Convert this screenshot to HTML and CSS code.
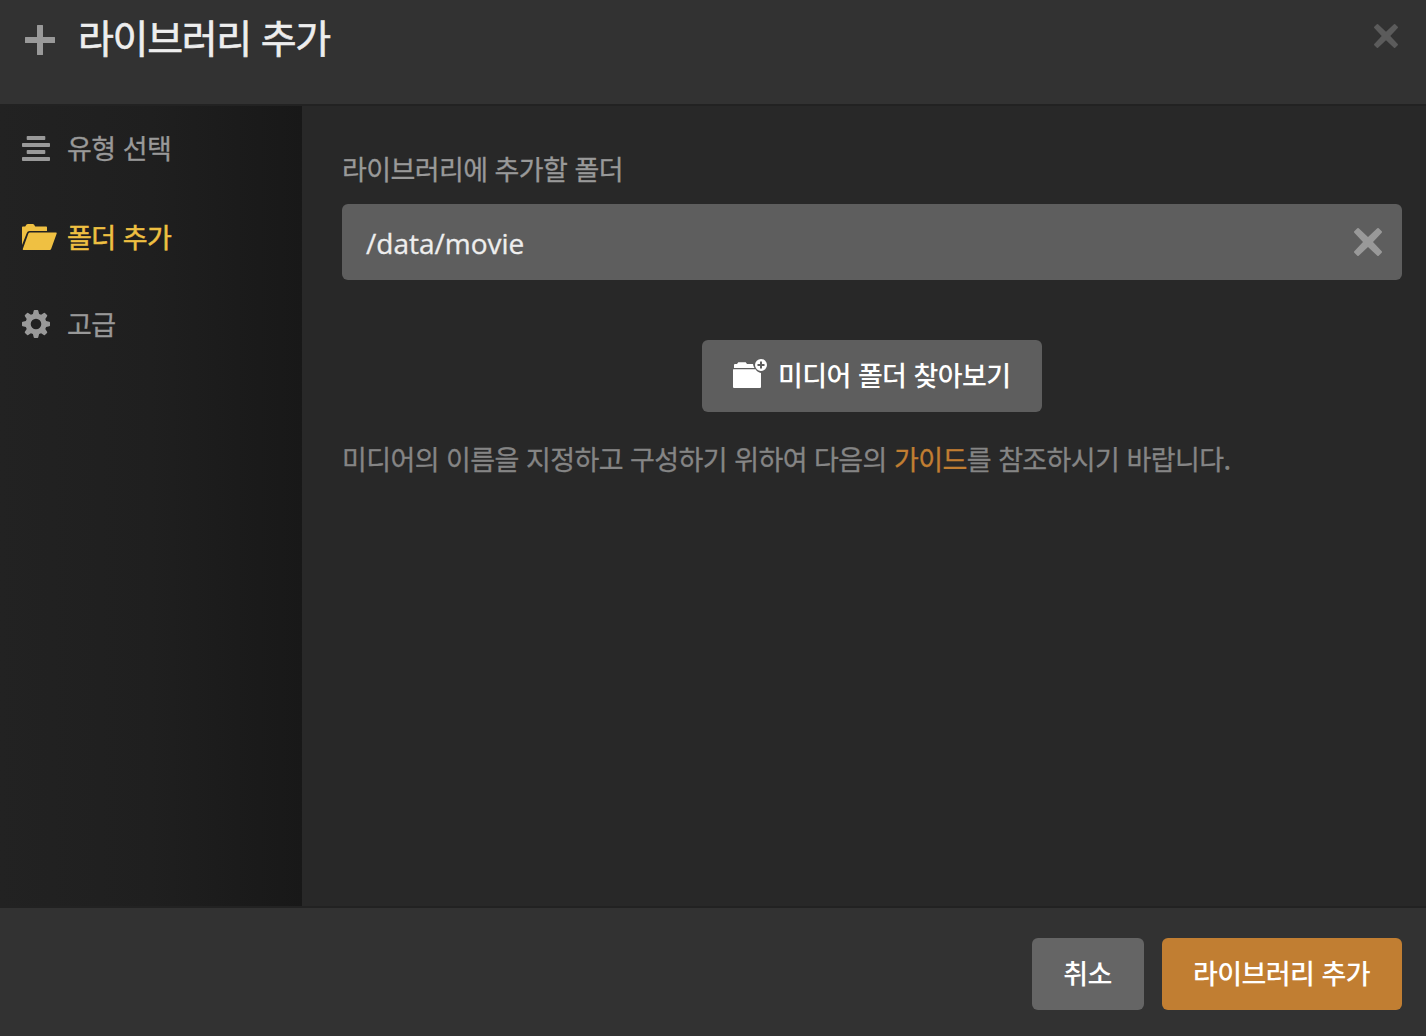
FILE: index.html
```html
<!DOCTYPE html>
<html lang="ko">
<head>
<meta charset="utf-8">
<title>라이브러리 추가</title>
<link rel="stylesheet" href="styles.css">
</head>
<body>
<div class="modal">
  <header class="header">
    <svg class="plus" width="30" height="30" viewBox="0 0 30 30"><path d="M12.500 0h5q.5 0 .5.500V12h11.500q.5 0 .5.500v5q0 .5-.5.500H18v11.500q0 .5-.5.500h-5q-.5 0-.5-.500V18H.5q-.5 0-.5-.500v-5q0-.5.500-.500H12V.5q0-.5.500-.500z"/></svg>
    <h1 class="title">라이브러리 추가</h1>
    <button class="icon-button close" aria-label="닫기"><svg width="24" height="24" viewBox="0 0 28 28"><path d="M4.700.3 14 9l9.300-8.700q.7-.6 1.400 0l3 3q.6.700 0 1.400L19 14l8.700 9.300q.6.700 0 1.400l-3 3q-.7.600-1.400 0L14 19l-9.300 8.700q-.7.600-1.400 0l-3-3q-.6-.7 0-1.400L9 14 .3 4.700q-.6-.7 0-1.400l3-3q.7-.6 1.400 0z"/></svg></button>
  </header>
  <div class="body">
    <nav class="sidebar">
      <a class="step"><svg width="28" height="26" viewBox="0 0 28 26"><path d="M5.500 0h17q.8 0 .8.800v2.400q0 .8-.8.800h-17q-.8 0-.8-.8V.8q0-.8.800-.8zM.8 7h26.400q.8 0 .8.800v2.400q0 .8-.8.800H.8q-.8 0-.8-.8V7.800Q0 7 .8 7zM5.500 14h17q.8 0 .8.800v2.400q0 .8-.8.800h-17q-.8 0-.8-.8v-2.400q0-.8.800-.8zM.8 21h26.400q.8 0 .8.800v2.400q0 .8-.8.800H.8q-.8 0-.8-.8v-2.400q0-.8.800-.8z"/></svg><span>유형 선택</span></a>
      <a class="step active"><svg width="35" height="26" viewBox="0 0 35 26"><path d="M0 21V3.300Q0 2.500.8 2.500h2.400L4.500.6Q5 0 5.800 0h5q.8 0 1.200.6l1.200 1.900h11Q25 2.500 25 3.300V7H7.500q-2 0-2.700 2z"/><path d="M8 8.400h26q1 0 .7 1l-5.500 15.400Q28.800 26 27.600 26H1.500q-1 0-.7-1L6.400 9.600q.4-1.200 1.600-1.200z"/></svg><span>폴더 추가</span></a>
      <a class="step"><svg class="gear" width="28" height="28" viewBox="0 0 28 28"><path fill-rule="evenodd" d="M12.500 0h3q.6 0 .8.700l.8 3.200 2 .8 2.700-1.800q.6-.4 1.100.1l2.100 2.100q.5.500.1 1.100l-1.800 2.700.8 2 3.200.8q.7.200.7.800v3q0 .6-.7.800l-3.200.8-.8 2 1.800 2.700q.4.600-.1 1.100L22.900 25q-.5.500-1.100.1l-2.700-1.800-2 .8-.8 3.200q-.2.700-.8.700h-3q-.6 0-.8-.7l-.8-3.200-2-.8-2.700 1.800q-.6.400-1.100-.1L3 22.900q-.5-.5-.1-1.100l1.800-2.700-.8-2-3.200-.8Q0 16.100 0 15.500v-3q0-.6.700-.8l3.200-.8.8-2-1.800-2.700Q2.500 5.600 3 5.100L5.100 3q.5-.5 1.100-.1l2.700 1.800 2-.8.800-3.200q.2-.7.800-.7zM14 8.700a5.300 5.300 0 1 0 0 10.600 5.300 5.300 0 0 0 0-10.600z"/></svg><span>고급</span></a>
    </nav>
    <main class="content">
      <label class="label">라이브러리에 추가할 폴더</label>
      <div class="field"><span class="value">/data/movie</span><button class="icon-button clear" aria-label="지우기"><svg width="28" height="28" viewBox="0 0 28 28"><path d="M4.700.3 14 9l9.300-8.700q.7-.6 1.400 0l3 3q.6.700 0 1.400L19 14l8.700 9.300q.6.700 0 1.400l-3 3q-.7.600-1.400 0L14 19l-9.300 8.700q-.7.600-1.400 0l-3-3q-.6-.7 0-1.400L9 14 .3 4.700q-.6-.7 0-1.400l3-3q.7-.6 1.400 0z"/></svg></button></div>
      <button class="button browse"><svg width="35" height="30" viewBox="0 0 35 30"><path d="M1 9V6q0-1 1-1h2l1.300-1.700h7.400L14 5h6q.2 2.200 1.500 4zM.5 10.300h22q2 3.400 5.500 3.600V28q0 1-1 1H1q-1 0-1-1V10.800q0-.5.500-.5z"/><path fill-rule="evenodd" d="M28 0a6 6 0 1 0 0 12 6 6 0 0 0 0-12zM27 2.500h2V5h2.500v2H29v2.500h-2V7h-2.500V5H27z"/></svg><span>미디어 폴더 찾아보기</span></button>
      <p class="help">미디어의 이름을 지정하고 구성하기 위하여 다음의 <a class="link">가이드</a>를 참조하시기 바랍니다.</p>
    </main>
  </div>
  <footer class="footer">
    <button class="button cancel">취소</button>
    <button class="button primary">라이브러리 추가</button>
  </footer>
</div>
</body>
</html>
```
FILE: styles.css
```css
* { box-sizing: border-box; }
body {
  margin: 0;
  background: #282828;
  color: #999;
  font: 27px/40px "Noto Sans CJK KR", sans-serif;
  letter-spacing: -0.6px;
  word-spacing: 0.2px;
  -webkit-text-stroke: 0.3px;
}
svg { display: block; fill: currentColor; flex: none; }
button { font: inherit; letter-spacing: inherit; word-spacing: inherit; border: 0; }
.modal { display: flex; flex-direction: column; height: 1036px; }
.header {
  display: flex;
  align-items: flex-start;
  height: 106px;
  padding: 0 28px 0 25px;
  background: #323232;
  border-bottom: 2px solid #222;
}
.plus { margin-top: 25px; }
.title {
  margin: 7px 0 0 23px;
  color: #eee;
  font-size: 39px;
  font-weight: 400;
  line-height: 58px;
  letter-spacing: -1.3px;
  -webkit-text-stroke: 0.6px;
}
.icon-button { padding: 0; background: none; }
.close { margin: 24px 0 0 auto; color: #5b5b5b; }
.body { display: flex; flex: 1; }
.sidebar {
  display: flex;
  flex-direction: column;
  width: 302px;
  background: linear-gradient(90deg, #222, #1f1f1f 50%, #181818);
}
.step {
  display: flex;
  align-items: center;
  gap: 17px;
  height: 88px;
  padding: 0 0 3px 22px;
}
.step span { line-height: 38px; padding-bottom: 1px; }
.step.active { gap: 10px; padding-bottom: 2px; color: #efc042; -webkit-text-stroke: 0.5px; }
.gear { margin-bottom: 2px; }
.content {
  display: flex;
  flex-direction: column;
  flex: 1;
  padding: 43px 24px 0 40px;
}
.field {
  display: flex;
  align-items: center;
  justify-content: space-between;
  height: 76px;
  margin-top: 15px;
  padding: 0 20px 0 24px;
  border-radius: 6px;
  background: #5e5e5e;
}
.value {
  padding-top: 2px;
  color: #eee;
  font: 28px/40px "Open Sans", sans-serif;
  letter-spacing: 0;
}
.clear { color: #999; }
.button {
  height: 72px;
  padding: 0 1px 3px 0;
  border-radius: 6px;
  color: #fff;
  font-weight: 500;
  background: #5e5e5e;
  -webkit-text-stroke: 0;
}
.browse {
  display: flex;
  align-items: center;
  align-self: center;
  width: 340px;
  margin-top: 60px;
  padding-left: 31px;
  gap: 10px;
}
.browse svg { margin-bottom: 2px; }
.help { margin: 27px 0 0; color: #858585; white-space: nowrap; }
.link { color: #c17e32; }
.footer {
  display: flex;
  justify-content: flex-end;
  gap: 18px;
  height: 130px;
  padding: 30px 24px 0;
  background: #323232;
  border-top: 2px solid #222;
}
.cancel { width: 112px; background: #656565; }
.primary { width: 240px; background: #c17e32; }
```
